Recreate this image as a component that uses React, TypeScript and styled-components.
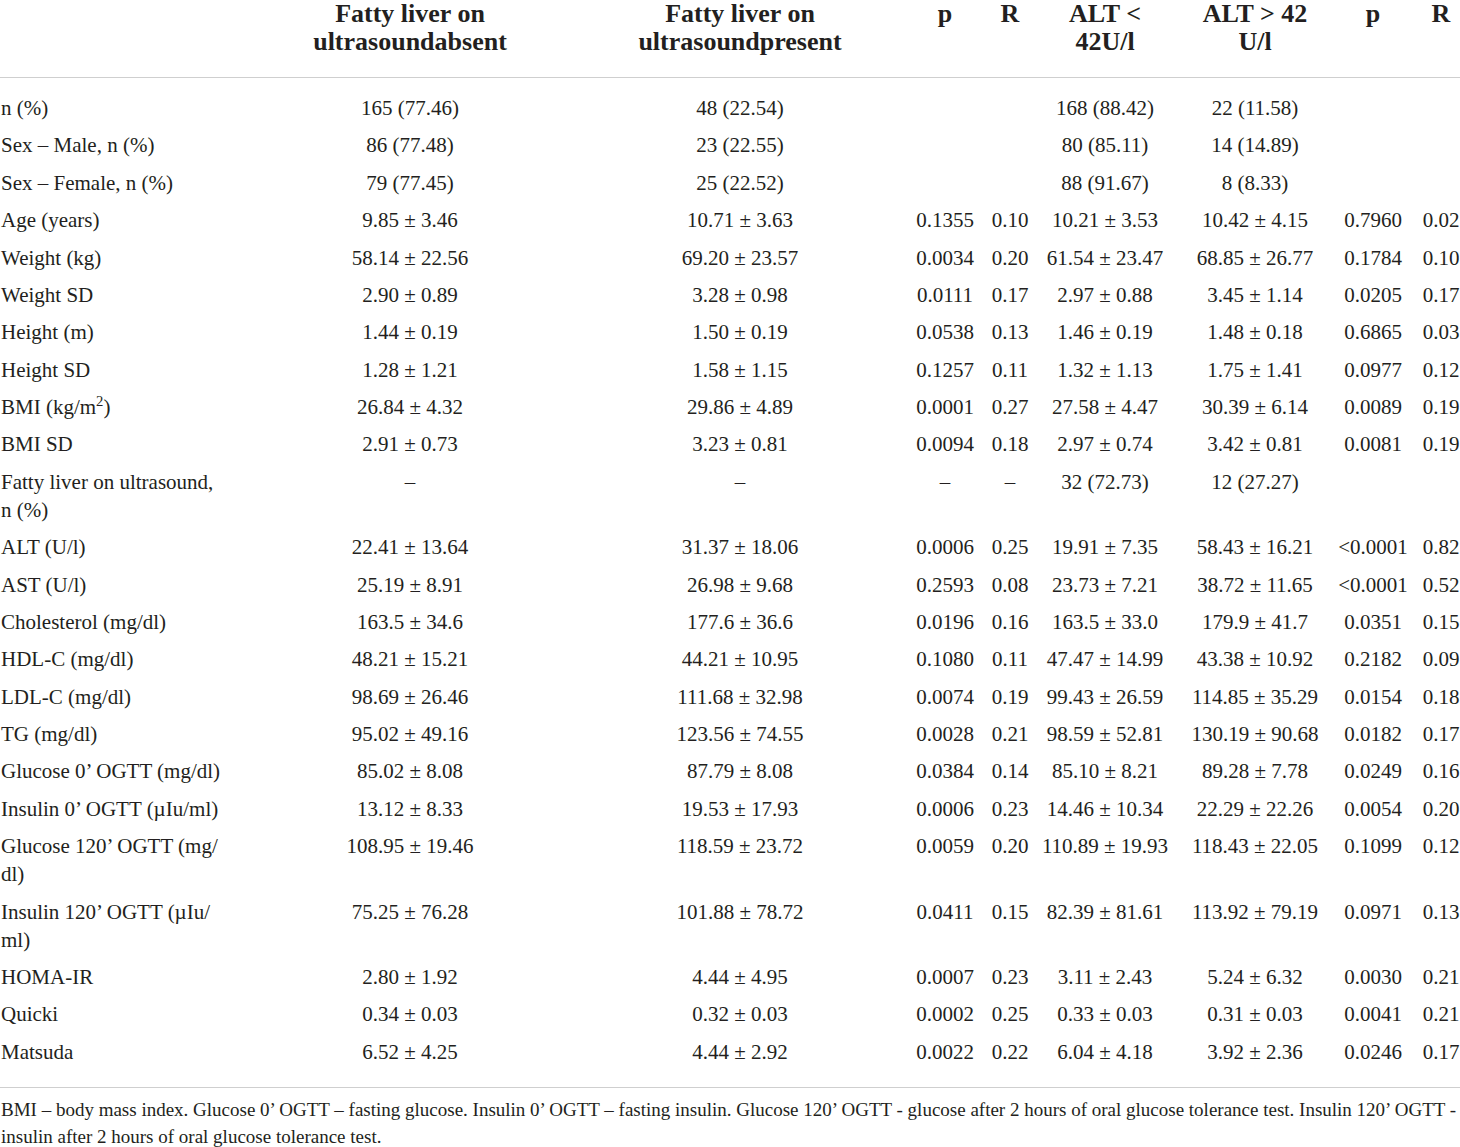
import React from "react";
import styled, { createGlobalStyle } from "styled-components";

const GlobalStyle = createGlobalStyle`
  html, body {
    margin: 0;
    padding: 0;
    background: #ffffff;
  }
  body {
    font-family: "Liberation Serif", "Times New Roman", serif;
    color: #231f20;
  }
`;

const Page = styled.div`
  width: 1460px;
  display: flex;
  flex-direction: column;
`;

const Table = styled.table`
  width: 1460px;
  border-collapse: collapse;
  table-layout: fixed;
  font-family: "Liberation Serif", "Times New Roman", serif;
`;

const Col = styled.col<{ $w: number }>`
  width: ${(p) => p.$w}px;
`;

const HeadCell = styled.th`
  font-size: 26px;
  font-weight: 700;
  line-height: 28px;
  text-align: center;
  vertical-align: top;
  padding: 0 0 21px 0;
  border-bottom: 1px solid #cfcfcf;
  white-space: nowrap;
  &:last-child {
    padding-left: 11px;
  }
`;

const Row = styled.tr`
  &:first-child td {
    padding-top: 16px;
  }
  &:last-child td {
    padding-bottom: 21px;
  }
`;

const Cell = styled.td`
  font-size: 21px;
  line-height: 28px;
  text-align: center;
  vertical-align: top;
  padding: 4.7px 0;
  white-space: nowrap;
  &:last-child {
    padding-left: 11px;
  }
`;

const LabelCell = styled(Cell)`
  text-align: left;
  padding-left: 1px;
`;

const TableEnd = styled.tbody`
  border-bottom: 1px solid #cfcfcf;
`;

const Footnote = styled.p`
  margin: 0;
  padding: 8px 0 0 1px;
  font-size: 19px;
  line-height: 27px;
  white-space: nowrap;
`;

type RowData = [React.ReactNode, ...string[]];

const rows: RowData[] = [
  ["n (%)", "165 (77.46)", "48 (22.54)", "", "", "168 (88.42)", "22 (11.58)", "", ""],
  ["Sex – Male, n (%)", "86 (77.48)", "23 (22.55)", "", "", "80 (85.11)", "14 (14.89)", "", ""],
  ["Sex – Female, n (%)", "79 (77.45)", "25 (22.52)", "", "", "88 (91.67)", "8 (8.33)", "", ""],
  ["Age (years)", "9.85 ± 3.46", "10.71 ± 3.63", "0.1355", "0.10", "10.21 ± 3.53", "10.42 ± 4.15", "0.7960", "0.02"],
  ["Weight (kg)", "58.14 ± 22.56", "69.20 ± 23.57", "0.0034", "0.20", "61.54 ± 23.47", "68.85 ± 26.77", "0.1784", "0.10"],
  ["Weight SD", "2.90 ± 0.89", "3.28 ± 0.98", "0.0111", "0.17", "2.97 ± 0.88", "3.45 ± 1.14", "0.0205", "0.17"],
  ["Height (m)", "1.44 ± 0.19", "1.50 ± 0.19", "0.0538", "0.13", "1.46 ± 0.19", "1.48 ± 0.18", "0.6865", "0.03"],
  ["Height SD", "1.28 ± 1.21", "1.58 ± 1.15", "0.1257", "0.11", "1.32 ± 1.13", "1.75 ± 1.41", "0.0977", "0.12"],
  [
    <>
      BMI (kg/m<sup style={{ fontSize: "0.7em", lineHeight: 0 }}>2</sup>)
    </>,
    "26.84 ± 4.32", "29.86 ± 4.89", "0.0001", "0.27", "27.58 ± 4.47", "30.39 ± 6.14", "0.0089", "0.19",
  ],
  ["BMI SD", "2.91 ± 0.73", "3.23 ± 0.81", "0.0094", "0.18", "2.97 ± 0.74", "3.42 ± 0.81", "0.0081", "0.19"],
  [
    <>
      Fatty liver on ultrasound,
      <br />n (%)
    </>,
    "–", "–", "–", "–", "32 (72.73)", "12 (27.27)", "", "",
  ],
  ["ALT (U/l)", "22.41 ± 13.64", "31.37 ± 18.06", "0.0006", "0.25", "19.91 ± 7.35", "58.43 ± 16.21", "<0.0001", "0.82"],
  ["AST (U/l)", "25.19 ± 8.91", "26.98 ± 9.68", "0.2593", "0.08", "23.73 ± 7.21", "38.72 ± 11.65", "<0.0001", "0.52"],
  ["Cholesterol (mg/dl)", "163.5 ± 34.6", "177.6 ± 36.6", "0.0196", "0.16", "163.5 ± 33.0", "179.9 ± 41.7", "0.0351", "0.15"],
  ["HDL-C (mg/dl)", "48.21 ± 15.21", "44.21 ± 10.95", "0.1080", "0.11", "47.47 ± 14.99", "43.38 ± 10.92", "0.2182", "0.09"],
  ["LDL-C (mg/dl)", "98.69 ± 26.46", "111.68 ± 32.98", "0.0074", "0.19", "99.43 ± 26.59", "114.85 ± 35.29", "0.0154", "0.18"],
  ["TG (mg/dl)", "95.02 ± 49.16", "123.56 ± 74.55", "0.0028", "0.21", "98.59 ± 52.81", "130.19 ± 90.68", "0.0182", "0.17"],
  ["Glucose 0’ OGTT (mg/dl)", "85.02 ± 8.08", "87.79 ± 8.08", "0.0384", "0.14", "85.10 ± 8.21", "89.28 ± 7.78", "0.0249", "0.16"],
  ["Insulin 0’ OGTT (µIu/ml)", "13.12 ± 8.33", "19.53 ± 17.93", "0.0006", "0.23", "14.46 ± 10.34", "22.29 ± 22.26", "0.0054", "0.20"],
  [
    <>
      Glucose 120’ OGTT (mg/
      <br />dl)
    </>,
    "108.95 ± 19.46", "118.59 ± 23.72", "0.0059", "0.20", "110.89 ± 19.93", "118.43 ± 22.05", "0.1099", "0.12",
  ],
  [
    <>
      Insulin 120’ OGTT (µIu/
      <br />ml)
    </>,
    "75.25 ± 76.28", "101.88 ± 78.72", "0.0411", "0.15", "82.39 ± 81.61", "113.92 ± 79.19", "0.0971", "0.13",
  ],
  ["HOMA-IR", "2.80 ± 1.92", "4.44 ± 4.95", "0.0007", "0.23", "3.11 ± 2.43", "5.24 ± 6.32", "0.0030", "0.21"],
  ["Quicki", "0.34 ± 0.03", "0.32 ± 0.03", "0.0002", "0.25", "0.33 ± 0.03", "0.31 ± 0.03", "0.0041", "0.21"],
  ["Matsuda", "6.52 ± 4.25", "4.44 ± 2.92", "0.0022", "0.22", "6.04 ± 4.18", "3.92 ± 2.36", "0.0246", "0.17"],
];

const widths = [245, 330, 330, 80, 50, 140, 160, 76, 49];

const headers: React.ReactNode[] = [
  "",
  <>
    Fatty liver on
    <br />
    ultrasoundabsent
  </>,
  <>
    Fatty liver on
    <br />
    ultrasoundpresent
  </>,
  "p",
  "R",
  <>
    ALT &lt;
    <br />
    42U/l
  </>,
  <>
    ALT &gt; 42
    <br />
    U/l
  </>,
  "p",
  "R",
];

export default function App() {
  return (
    <>
      <GlobalStyle />
      <Page>
        <Table>
          <colgroup>
            {widths.map((w, i) => (
              <Col key={i} $w={w} />
            ))}
          </colgroup>
          <thead>
            <tr>
              {headers.map((h, i) => (
                <HeadCell key={i}>{h}</HeadCell>
              ))}
            </tr>
          </thead>
          <TableEnd>
            {rows.map((r, ri) => (
              <Row key={ri}>
                <LabelCell>{r[0]}</LabelCell>
                {r.slice(1).map((v, ci) => (
                  <Cell key={ci}>{v}</Cell>
                ))}
              </Row>
            ))}
          </TableEnd>
        </Table>
        <Footnote>
          BMI – body mass index. Glucose 0’ OGTT – fasting glucose. Insulin 0’ OGTT – fasting insulin. Glucose 120’
          OGTT - glucose after 2 hours of oral glucose tolerance test. Insulin 120’ OGTT -
          <br />
          insulin after 2 hours of oral glucose tolerance test.
        </Footnote>
      </Page>
    </>
  );
}
